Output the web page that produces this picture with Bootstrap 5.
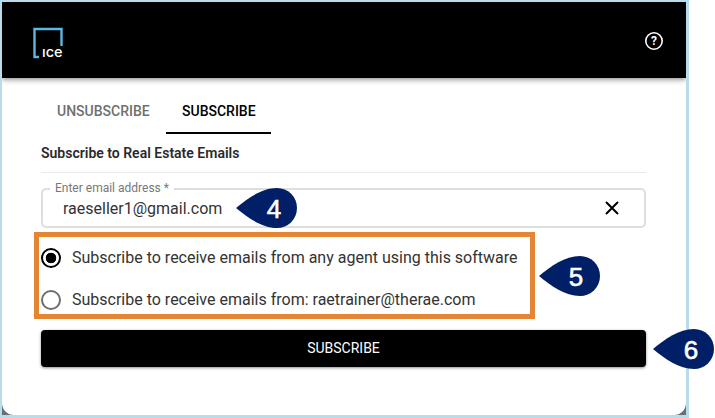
<!DOCTYPE html>
<html>

<head>
  <meta charset="utf-8">
  <meta name="viewport" content="width=device-width">
  <title>Subscribe</title>
  <link href="https://cdn.jsdelivr.net/npm/bootstrap@5.3.2/dist/css/bootstrap.min.css" rel="stylesheet" type="text/css" />
  <style>
    html, body { height: 418px; overflow: hidden; background: #fff; }
    body { font-family: Roboto, "Liberation Sans", sans-serif; position: relative; }
    .shot-frame { width: 689px; height: 418px; border: solid #b9dde8; border-width: 2px 3px 3px 2px; background: #66707a; }
    .shot-panel { height: 100%; background: #fff; border-radius: 0 0 12px 12px; overflow: hidden; }
    .top-bar { height: 76px; background: #000; box-shadow: 0 2px 5px rgba(0,0,0,.4); padding: 25px 22px 0 31px; }
    .ice-logo { display: block; }
    .ice-logo text { font-family: Inter, sans-serif; font-size: 14.5px; font-weight: 500; fill: #fff; }
    .help-btn { margin-top: 4px; display: block; }
    .help-btn text { font-family: Roboto, sans-serif; font-size: 12px; font-weight: 700; fill: #fff; }
    .form-area { padding: 13px 40px 0 39px; }
    .tab-row { height: 43px; }
    .tab-item { font-size: 14px; font-weight: 500; line-height: 40px; padding: 0 16px; color: #6f6f6f; height: 43px; }
    .tab-item.on { color: #000; border-bottom: 2px solid #000; height: 43px; width: 105px; }
    .tab-first { width: 125px; }
    .form-title { font-size: 14px; font-weight: 600; color: #2a2a2a; margin: 0; padding-top: 11px; line-height: 17px; height: 39px; border-bottom: 1.5px solid #eaeaea; }
    .email-box { margin: 15px 0 0 0; height: 40px; border: 2px solid #dedede; border-radius: 5px; padding: 0 25px 0 20px; position: relative; }
    .email-legend { position: absolute; left: 7px; top: -9px; background: #fff; padding: 0 5px; font-size: 12px; line-height: 14px; color: #777; }
    .email-value { font-size: 16px; color: #333; line-height: 37px; }
    .clear-icon { display: block; }
    .choice-box { margin: 4px 111px 0 -7px; height: 87px; border: 5px solid #e38532; padding: 0 0 0 2px; }
    .choice-row { display: flex; align-items: center; gap: 11px; height: 42px; font-size: 16px; color: #333; }
    .choice-dot { width: 20px; height: 20px; border-radius: 50%; border: 2px solid #6f6f6f; flex: none; background: #fff; }
    .choice-dot.on { border-color: #000; background: radial-gradient(circle, #000 0 5px, #fff 5.6px); }
    .go-btn { display: block; width: 100%; height: 37px; margin-top: 11px; background: #000; color: #fff; border: 0; border-radius: 4px; font-size: 14px; font-weight: 400; line-height: 37px; padding: 0; box-shadow: 0 1px 3px rgba(0,0,0,.45); }
    .go-btn:hover { background: #000; color: #fff; }
    .step-pin { position: absolute; display: block; }
    .step-pin text { font-family: "Liberation Sans", sans-serif; font-size: 26px; font-weight: 400; fill: #fff; stroke: #fff; stroke-width: .6px; text-anchor: middle; }
  </style>
</head>

<body>
  <div class="shot-frame">
    <div class="shot-panel">
      <div class="top-bar d-flex justify-content-between align-items-start">
        <svg class="ice-logo" width="31" height="32" viewBox="0 0 31 32">
          <path d="M6 30H1.5V2H28.5V19" fill="none" stroke="#5cb8e4" stroke-width="2.4" />
          <text x="9" y="30">ıce</text>
        </svg>
        <svg class="help-btn" width="20" height="20" viewBox="0 0 20 20">
          <circle cx="10" cy="10" r="8.2" fill="none" stroke="#fff" stroke-width="1.6" />
          <text x="10" y="14.3" text-anchor="middle">?</text>
        </svg>
      </div>

      <div class="form-area">
        <div class="tab-row d-flex">
          <div class="tab-item tab-first">UNSUBSCRIBE</div>
          <div class="tab-item on">SUBSCRIBE</div>
        </div>
        <h6 class="form-title">Subscribe to Real Estate Emails</h6>

        <div class="email-box d-flex justify-content-between align-items-center">
          <span class="email-legend">Enter email address *</span>
          <span class="email-value">raeseller1@gmail.com</span>
          <svg class="clear-icon" width="14" height="14" viewBox="0 0 14 14">
            <path d="M1 1L13 13M13 1L1 13" stroke="#000" stroke-width="2" />
          </svg>
        </div>

        <div class="choice-box">
          <div class="choice-row"><span class="choice-dot on"></span>Subscribe to receive emails from any agent using this software</div>
          <div class="choice-row"><span class="choice-dot"></span>Subscribe to receive emails from: raetrainer@therae.com</div>
        </div>

        <button class="btn go-btn">SUBSCRIBE</button>
      </div>
    </div>
  </div>

  <svg class="step-pin" style="left:236px;top:188px" width="61" height="40" viewBox="0 0 61 40">
    <path d="M0 20C12 10 26 0 41 0A20 20 0 0 1 41 40C26 40 12 30 0 20Z" fill="#001f66" />
    <text x="38" y="30">4</text>
  </svg>
  <svg class="step-pin" style="left:539px;top:256px" width="61" height="40" viewBox="0 0 61 40">
    <path d="M0 20C12 10 26 0 41 0A20 20 0 0 1 41 40C26 40 12 30 0 20Z" fill="#001f66" />
    <text x="37" y="30">5</text>
  </svg>
  <svg class="step-pin" style="left:653px;top:329px" width="61" height="40" viewBox="0 0 61 40">
    <path d="M0 20C12 10 26 0 41 0A20 20 0 0 1 41 40C26 40 12 30 0 20Z" fill="#001f66" />
    <text x="38" y="30">6</text>
  </svg>
</body>

</html>
